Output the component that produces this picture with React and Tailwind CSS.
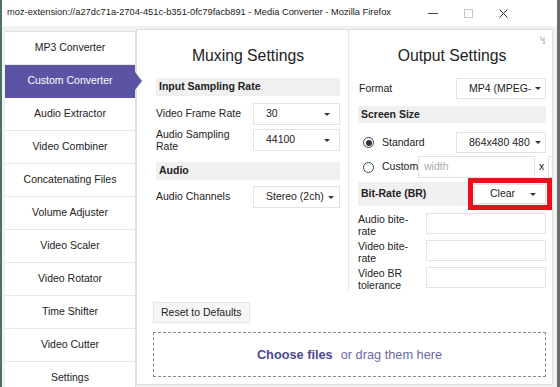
import React from "react";

const NAV = [
  "MP3 Converter",
  "Custom Converter",
  "Audio Extractor",
  "Video Combiner",
  "Concatenating Files",
  "Volume Adjuster",
  "Video Scaler",
  "Video Rotator",
  "Time Shifter",
  "Video Cutter",
  "Settings",
];

function Caret() {
  return (
    <span className="inline-block w-0 h-0 shrink-0 border-x-[3px] border-t-[3px] border-x-transparent border-t-[#333]" />
  );
}

function Select({ value, className = "" }) {
  return (
    <div
      className={`flex items-center justify-between bg-white border border-[#e2e2e2] pl-[12px] pr-[9px] whitespace-nowrap overflow-hidden ${className}`}
    >
      <span className="overflow-hidden">{value}</span>
      <Caret />
    </div>
  );
}

function SectionHeader({ children, className = "" }) {
  return (
    <div className={`bg-[#f0f0f0] font-bold pl-[3px] flex items-center ${className}`}>
      {children}
    </div>
  );
}

function Radio({ checked }) {
  return (
    <span className="w-[11px] h-[11px] rounded-full border border-[#444] bg-white flex items-center justify-center shrink-0">
      {checked && <span className="w-[6px] h-[6px] rounded-full bg-[#333]" />}
    </span>
  );
}

function Field({ label }) {
  return (
    <div className="flex items-start">
      <div className="w-[68px] pr-[6px] leading-[12px]">{label}</div>
      <div className="flex-1 h-[21px] bg-white border border-[#e2e2e2]" />
    </div>
  );
}

export default function App() {
  return (
    <div className="w-[560px] h-[387px] overflow-hidden flex bg-[#6b6b6b] font-['Liberation_Sans',Arial,sans-serif] text-[10.5px] text-[#222]">
      <div className="w-[2px] bg-[#4f6f67] shrink-0" />
      <div className="w-[555px] shrink-0 flex flex-col bg-[#f1f1f1]">
        {/* Title bar */}
        <div className="h-[26px] bg-white flex items-center pl-[5px] shrink-0">
          <span className="text-[9.3px] text-[#1a1a1a] whitespace-nowrap">
            moz-extension://a27dc71a-2704-451c-b351-0fc79facb891 - Media Converter - Mozilla Firefox
          </span>
          <div className="ml-auto flex items-center h-full">
            <span className="w-[10px] h-px bg-[#444] mr-[26px]" />
            <span className="w-[9px] h-[9px] border border-[#c8c8c8] mr-[26px]" />
            <svg width="9" height="9" viewBox="0 0 9 9" className="mr-[49px]">
              <path d="M0.5 0.5 L8.5 8.5 M8.5 0.5 L0.5 8.5" stroke="#333" strokeWidth="1" />
            </svg>
          </div>
        </div>

        <div className="flex-1 flex pt-[3px] pl-[3px] min-h-0">
          {/* Sidebar */}
          <div className="w-[131px] shrink-0 mt-[2px] bg-white border-r border-t border-[#e0e0e0] flex flex-col">
            {NAV.map((item) => {
              const active = item === "Custom Converter";
              return (
                <div
                  key={item}
                  className={`relative h-[33px] shrink-0 flex items-center justify-center border-b ${
                    active
                      ? "bg-[#5b54a4] text-white border-[#5b54a4] z-10"
                      : "border-[#e8e8e8]"
                  }`}
                >
                  {item}
                  {active && (
                    <span className="absolute -right-[7px] top-1/2 -translate-y-1/2 w-0 h-0 border-y-[9px] border-l-[7px] border-y-transparent border-l-[#5b54a4]" />
                  )}
                </div>
              );
            })}
          </div>

          {/* Main panel */}
          <div className="w-[417px] shrink-0 overflow-hidden bg-white border border-[#dedede] pl-[16px] pr-[6px] flex flex-col mb-[2px]">
            <div className="flex">
              {/* Muxing */}
              <div className="w-[196px] shrink-0 pl-[3px] pr-[8px] pt-[16px] border-r border-dotted border-[#d4d4d4] h-[262px]">
                <h2 className="text-[15.75px] leading-[20px] text-center text-[#222]">Muxing Settings</h2>
                <SectionHeader className="h-[18px] mt-[12px]">Input Sampling Rate</SectionHeader>
                <div className="flex items-center mt-[7px]">
                  <div className="w-[97px]">Video Frame Rate</div>
                  <Select value="30" className="flex-1 h-[22px]" />
                </div>
                <div className="flex items-center mt-[3px]">
                  <div className="w-[97px] pr-[10px] leading-[12px]">Audio Sampling Rate</div>
                  <Select value="44100" className="flex-1 h-[22px]" />
                </div>
                <SectionHeader className="h-[18px] mt-[10px]">Audio</SectionHeader>
                <div className="flex items-center mt-[6px]">
                  <div className="w-[97px]">Audio Channels</div>
                  <Select value="Stereo (2ch)" className="flex-1 h-[22px] !pr-[5px] gap-[2px]" />
                </div>
              </div>

              {/* Output */}
              <div className="relative w-[198px] shrink-0 pl-[9px] pr-[1px] pt-[16px]">
                <svg
                  width="6"
                  height="10"
                  viewBox="0 0 6 10"
                  className="absolute right-[1px] top-[5px]"
                >
                  <path d="M1 1 L1 5 L4 5 M4 2 L4 9 M3 8 L4 9 L5 8" stroke="#aaa" strokeWidth="0.9" fill="none" />
                </svg>
                <h2 className="text-[15.75px] leading-[20px] text-center text-[#222]">Output Settings</h2>
                <div className="flex items-center mt-[12px]">
                  <div className="w-[98px] pl-[1px]">Format</div>
                  <Select value="MP4 (MPEG-" className="flex-1 h-[21px] !pr-[4px]" />
                </div>
                <SectionHeader className="h-[17px] mt-[7px]">Screen Size</SectionHeader>
                <div className="flex items-center mt-[9px]">
                  <div className="w-[98px] flex items-center pl-[5px] gap-[8px]">
                    <Radio checked />
                    <span>Standard</span>
                  </div>
                  <Select value="864x480 480" className="flex-1 h-[21px] !pr-[4px]" />
                </div>
                <div className="flex items-center mt-[3px] whitespace-nowrap">
                  <div className="w-[60px] shrink-0 flex items-center pl-[5px] gap-[8px]">
                    <Radio />
                    <span>Custom</span>
                  </div>
                  <div className="w-[117px] shrink-0 h-[22px] bg-white border border-[#e2e2e2] flex items-center pl-[5px] text-[#aaa]">
                    width
                  </div>
                  <span className="mx-[4px] shrink-0">x</span>
                  <div className="w-[60px] shrink-0 h-[22px] bg-white border border-[#e2e2e2] flex items-center pl-[2px] text-[#aaa]">
                    h
                  </div>
                </div>
                <div className="bg-[#f0f0f0] h-[24px] mt-[4px] flex items-center pl-[3px]">
                  <span className="font-bold">Bit-Rate (BR)</span>
                  <div className="relative ml-auto w-[72px] h-[20px]">
                    <Select value="Clear" className="w-full h-full !pl-[15px] !pr-[9px]" />
                    <span className="absolute -inset-[6px] border-[5px] border-[#e5121b]" />
                  </div>
                </div>
                <div className="flex flex-col gap-[3px] mt-[7px]">
                  <Field label="Audio bite-rate" />
                  <Field label="Video bite-rate" />
                  <Field label="Video BR tolerance" />
                </div>
              </div>
            </div>

            <button className="self-start mt-[10px] h-[21px] px-[7px] bg-[#f6f6f6] border border-[#e6e6e6] text-[10.5px] text-[#222]">
              Reset to Defaults
            </button>
            <div className="mt-[9px] h-[45px] border border-dashed border-[#8a8a8a] flex items-center justify-center text-[12.75px]">
              <span className="font-bold text-[#4b4a8e]">Choose files</span>
              <span className="ml-[8px] text-[#6a68a6]">or drag them here</span>
            </div>
          </div>
        </div>
      </div>
      <div className="w-[3px] bg-[#6b6b6b] shrink-0" />
    </div>
  );
}
